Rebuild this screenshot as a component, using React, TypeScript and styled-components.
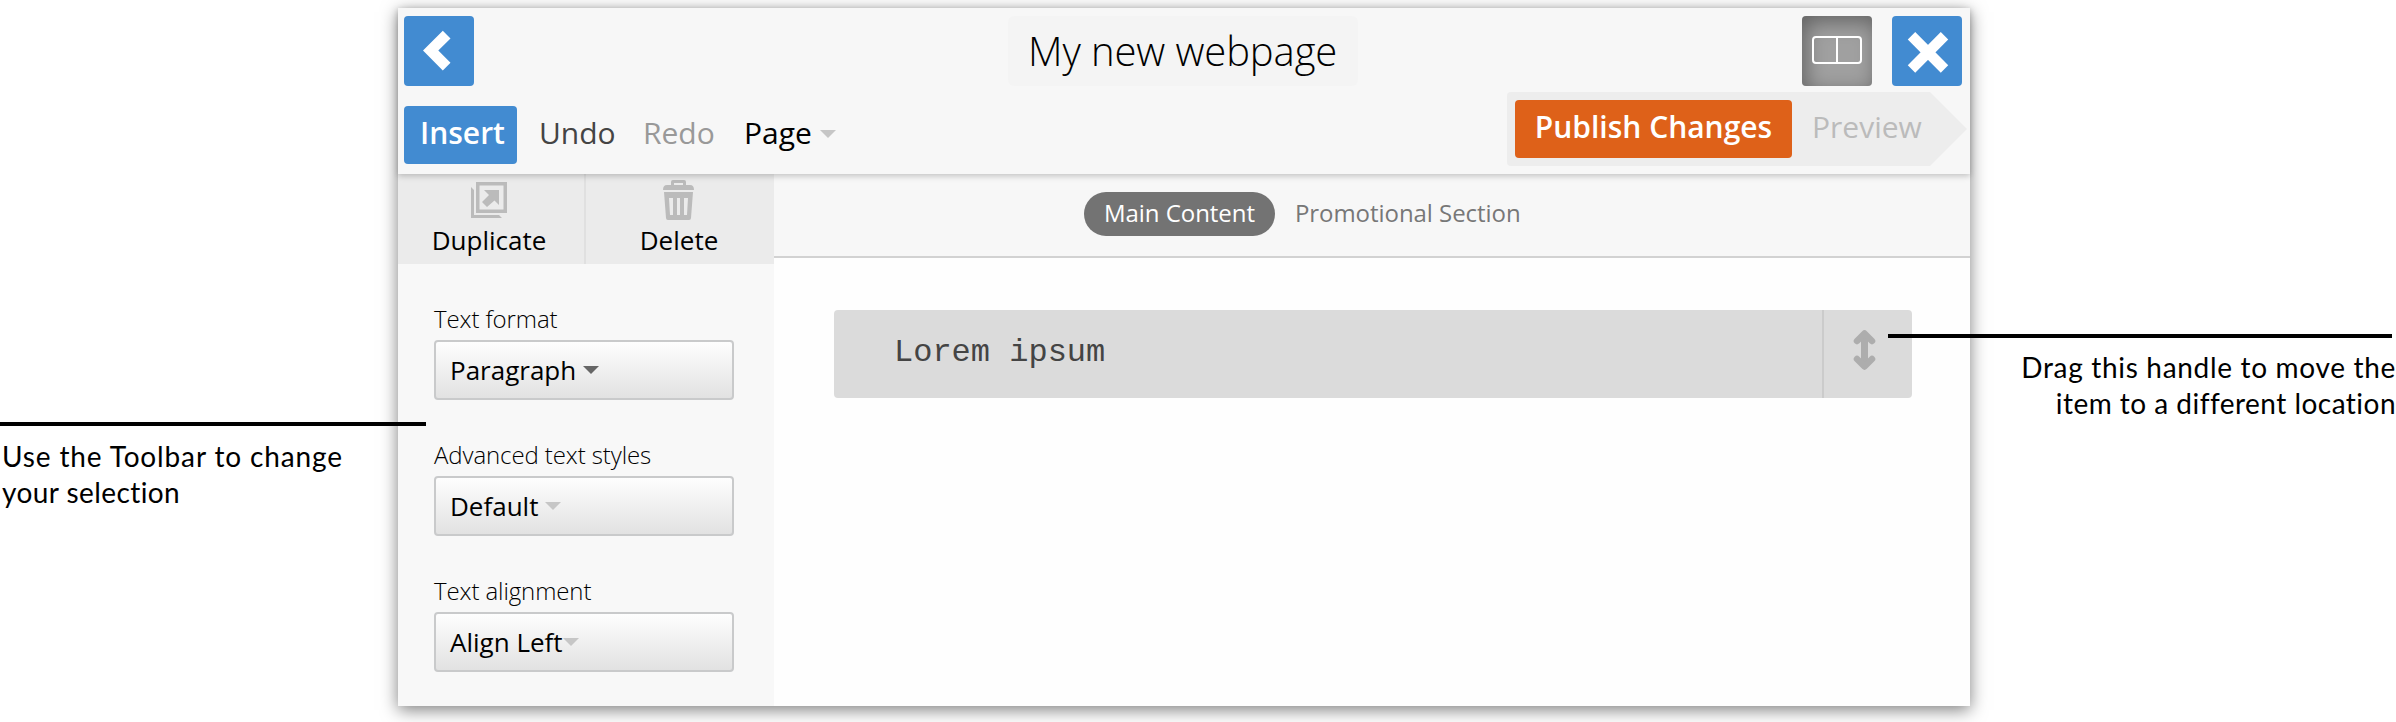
import React from "react";
import styled, { createGlobalStyle } from "styled-components";

const Global = createGlobalStyle`
  *, *::before, *::after { box-sizing: border-box; }
  body { margin: 0; background: #fff; font-family: "Open Sans", sans-serif; color: #000; }
  button { font: inherit; border: 0; padding: 0; margin: 0; color: inherit; }
`;

const Page = styled.div`
  position: relative;
  display: flex;
  align-items: flex-start;
  justify-content: space-between;
  width: 2396px;
  height: 722px;
  overflow: hidden;
`;

const Note = styled.p<{ $side: "left" | "right" }>`
  flex: none;
  margin: ${(p) => (p.$side === "left" ? "438px 0 0 2px" : "349px 0 0")};
  width: ${(p) => (p.$side === "left" ? 396 : 426)}px;
  text-align: ${(p) => p.$side};
  font-family: Lato, sans-serif;
  font-size: 28px;
  line-height: 36px;
`;

const NoteLine = styled.span<{ $spacing: number }>`
  display: block;
  letter-spacing: ${(p) => p.$spacing}px;
  white-space: nowrap;
`;

const Pointer = styled.div<{ $side: "left" | "right" }>`
  position: absolute;
  z-index: 2;
  height: 4px;
  background: #000;
  top: ${(p) => (p.$side === "left" ? 422 : 334)}px;
  left: ${(p) => (p.$side === "left" ? 0 : 1888)}px;
  width: ${(p) => (p.$side === "left" ? 426 : 504)}px;
`;

const Window = styled.div`
  flex: none;
  display: flex;
  flex-direction: column;
  margin-top: 8px;
  width: 1572px;
  height: 698px;
  background: #fefefe;
  box-shadow: 0 4px 16px rgba(0, 0, 0, 0.5);
`;

const Header = styled.header`
  position: relative;
  z-index: 1;
  flex: none;
  height: 166px;
  background: #f7f7f7;
  box-shadow: 0 2px 6px rgba(0, 0, 0, 0.22);
`;

const TitleRow = styled.div`
  display: flex;
  justify-content: space-between;
  height: 78px;
  padding: 8px 8px 0 6px;
`;

const IconButton = styled.button<{ $pressed?: boolean }>`
  display: block;
  width: 70px;
  height: 70px;
  border-radius: 4px;
  background: ${(p) => (p.$pressed ? "#a0a0a0" : "#428bd1")};
  box-shadow: ${(p) => (p.$pressed ? "inset 4px 6px 20px rgba(0, 0, 0, 0.38)" : "none")};
  svg { display: block; }
`;

const Title = styled.h1`
  margin: 0 0 0 90px;
  width: 350px;
  height: 70px;
  padding-left: 20px;
  border-radius: 6px;
  background: #f4f4f4;
  font-size: 40px;
  font-weight: 300;
  line-height: 70px;
  letter-spacing: -0.1px;
  white-space: nowrap;
`;

const TitleActions = styled.div`
  display: flex;
  gap: 20px;
`;

const MenuRow = styled.div`
  display: flex;
  justify-content: space-between;
  padding: 6px 3px 0 6px;
`;

const Menu = styled.nav`
  display: flex;
  align-items: center;
  height: 58px;
  margin-top: 14px;
  font-size: 30px;
  line-height: 54px;
`;

const InsertButton = styled.button`
  width: 113px;
  height: 58px;
  padding: 0 0 4px 4px;
  border-radius: 4px;
  background: #428bd1;
  color: #fff;
  font-weight: 600;
`;

const MenuItem = styled.span<{ $tone: string; $width: number }>`
  width: ${(p) => p.$width}px;
  height: 58px;
  padding-left: 22px;
  color: ${(p) => p.$tone};
  white-space: nowrap;
`;

const Caret = styled.i<{ $dark?: boolean; $gap: number }>`
  display: inline-block;
  margin-left: ${(p) => p.$gap}px;
  border: 8px solid transparent;
  border-top-color: ${(p) => (p.$dark ? "#666" : "#c6c6c6")};
  border-bottom: 0;
  vertical-align: 6px;
`;

const PublishArrow = styled.div`
  display: flex;
  align-items: center;
  width: 460px;
  height: 74px;
  padding: 8px;
  border-radius: 4px;
  background: #ededed;
  clip-path: polygon(0 0, 423px 0, 100% 50%, 423px 100%, 0 100%);
  font-size: 30px;
  line-height: 54px;
`;

const PublishButton = styled.button`
  width: 277px;
  height: 58px;
  padding: 0 0 4px;
  border-radius: 4px;
  background: #de6119;
  color: #fff;
  font-weight: 600;
  white-space: nowrap;
`;

const Preview = styled.span`
  margin-left: 20px;
  height: 58px;
  color: #bbb;
`;

const Body = styled.div`
  flex: 1;
  display: flex;
`;

const Sidebar = styled.aside`
  width: 376px;
  background: #f8f8f8;
`;

const Actions = styled.div`
  display: flex;
  height: 90px;
  background: #ebebeb;
`;

const Action = styled.div<{ $divided?: boolean }>`
  width: 188px;
  padding-top: 6px;
  padding-right: ${(p) => (p.$divided ? 4 : 2)}px;
  border-right: ${(p) => (p.$divided ? "2px solid #e0e0e0" : "0")};
  text-align: center;
  font-size: 26px;
  line-height: 36px;
  svg { display: block; margin: 0 auto; height: 42px; }
`;

const Fields = styled.div`
  display: flex;
  flex-direction: column;
  gap: 40px;
  padding: 40px 40px 0 36px;
`;

const Field = styled.label`
  display: block;
  height: 96px;
  font-size: 24px;
  font-weight: 300;
  line-height: 30px;
  letter-spacing: -0.1px;
`;

const Select = styled.div`
  height: 60px;
  margin-top: 6px;
  padding-left: 14px;
  border: 2px solid #c9cacb;
  border-radius: 4px;
  background: linear-gradient(#fefefe, #e2e2e2);
  font-size: 26px;
  font-weight: 400;
  line-height: 56px;
  letter-spacing: 0;
`;

const Main = styled.main`
  flex: 1;
`;

const Tabs = styled.div`
  display: flex;
  height: 84px;
  padding: 18px 0 0 310px;
  background: #f7f7f7;
  border-bottom: 2px solid #d2d2d2;
`;

const Tab = styled.span<{ $active?: boolean }>`
  height: 44px;
  padding: 0 20px;
  border-radius: 22px;
  background: ${(p) => (p.$active ? "#737373" : "transparent")};
  color: ${(p) => (p.$active ? "#fff" : "#777")};
  font-size: 24px;
  line-height: 41px;
  letter-spacing: -0.05px;
  white-space: nowrap;
`;

const ContentItem = styled.div`
  display: flex;
  margin: 52px 58px 0 60px;
  height: 88px;
  border-radius: 4px;
  background: #dbdbdb;
`;

const ItemText = styled.div`
  flex: 1;
  padding-left: 60px;
  font-family: "Liberation Mono", monospace;
  font-size: 32px;
  line-height: 86px;
  color: #444;
`;

const Handle = styled.div`
  width: 90px;
  border-left: 2px solid #cbcbcb;
  svg { display: block; }
`;

const fields = [
  { label: "Text format", value: "Paragraph", dark: true, gap: 7 },
  { label: "Advanced text styles", value: "Default", gap: 7 },
  { label: "Text alignment", value: "Align Left", gap: 0 },
];

export default function App() {
  return (
    <Page>
      <Global />
      <Note $side="left">
        <NoteLine $spacing={0.86}>Use the Toolbar to change</NoteLine>
        <NoteLine $spacing={0.42}>your selection</NoteLine>
      </Note>
      <Window>
        <Header>
          <TitleRow>
            <IconButton aria-label="Back">
              <svg width="70" height="70" viewBox="0 0 70 70">
                <path d="M19 34.5 38.8 14.7 46.5 22.4 34.3 34.6 46.5 46.8 38.8 54.5Z" fill="#fff" />
              </svg>
            </IconButton>
            <Title>My new webpage</Title>
            <TitleActions>
              <IconButton $pressed aria-label="Split view">
                <svg width="70" height="70" viewBox="0 0 70 70" fill="none" stroke="#fff" strokeWidth="2">
                  <rect x="11" y="21" width="48" height="26" rx="3" />
                  <path d="M35 21V47" />
                </svg>
              </IconButton>
              <IconButton aria-label="Close">
                <svg width="70" height="70" viewBox="0 0 70 70">
                  <path d="M19.5 19.8 52.5 53M52.5 19.8 19.5 53" stroke="#fff" strokeWidth="10.5" />
                </svg>
              </IconButton>
            </TitleActions>
          </TitleRow>
          <MenuRow>
            <Menu>
              <InsertButton>Insert</InsertButton>
              <MenuItem $tone="#444" $width={104}>Undo</MenuItem>
              <MenuItem $tone="#999" $width={101}>Redo</MenuItem>
              <MenuItem $tone="#000" $width={120}>
                Page
                <Caret $gap={8} />
              </MenuItem>
            </Menu>
            <PublishArrow>
              <PublishButton>Publish Changes</PublishButton>
              <Preview>Preview</Preview>
            </PublishArrow>
          </MenuRow>
        </Header>
        <Body>
          <Sidebar>
            <Actions>
              <Action $divided>
                <svg width="38" height="42" viewBox="0 0 38 42" fill="#bbb">
                  <path fillRule="evenodd" d="M6 2H37V33H6ZM9.500 5.500V29.500H33.500V5.500Z" />
                  <path d="M1 7 4 10V35H29L32 38H1Z" />
                  <path d="M14 10H29V25L24.5 20.500 17 27 12 22 19 15Z" />
                </svg>
                Duplicate
              </Action>
              <Action>
                <svg width="32" height="42" viewBox="0 0 32 42" fill="#bbb">
                  <path fillRule="evenodd" d="M8 5V2Q8 0 10 0H21Q23 0 23 2V5H27Q31 5 31 10H0Q0 5 4 5ZM11 5H20V3H11Z" />
                  <path fillRule="evenodd" d="M1 12H30L28 38Q28 40 26 40H5Q3 40 3 38ZM6 18 7 35H10V18ZM14 18V35H17V18ZM21 18V35H24L25 18Z" />
                </svg>
                Delete
              </Action>
            </Actions>
            <Fields>
              {fields.map((f) => (
                <Field key={f.label}>
                  {f.label}
                  <Select>
                    {f.value}
                    <Caret $dark={f.dark} $gap={f.gap} />
                  </Select>
                </Field>
              ))}
            </Fields>
          </Sidebar>
          <Main>
            <Tabs>
              <Tab $active>Main Content</Tab>
              <Tab>Promotional Section</Tab>
            </Tabs>
            <ContentItem>
              <ItemText>Lorem ipsum</ItemText>
              <Handle>
                <svg width="88" height="88" viewBox="0 0 88 88" fill="none" stroke="#adadad" strokeLinecap="round" strokeLinejoin="round">
                  <path d="M40.5 28V52" strokeWidth="7" />
                  <path d="M33 31 40.5 23.5 48 31M33 49 40.5 56.5 48 49" strokeWidth="6.5" />
                </svg>
              </Handle>
            </ContentItem>
          </Main>
        </Body>
      </Window>
      <Note $side="right">
        <NoteLine $spacing={0.68}>Drag this handle to move the</NoteLine>
        <NoteLine $spacing={0.47}>item to a different location</NoteLine>
      </Note>
      <Pointer $side="left" />
      <Pointer $side="right" />
    </Page>
  );
}
